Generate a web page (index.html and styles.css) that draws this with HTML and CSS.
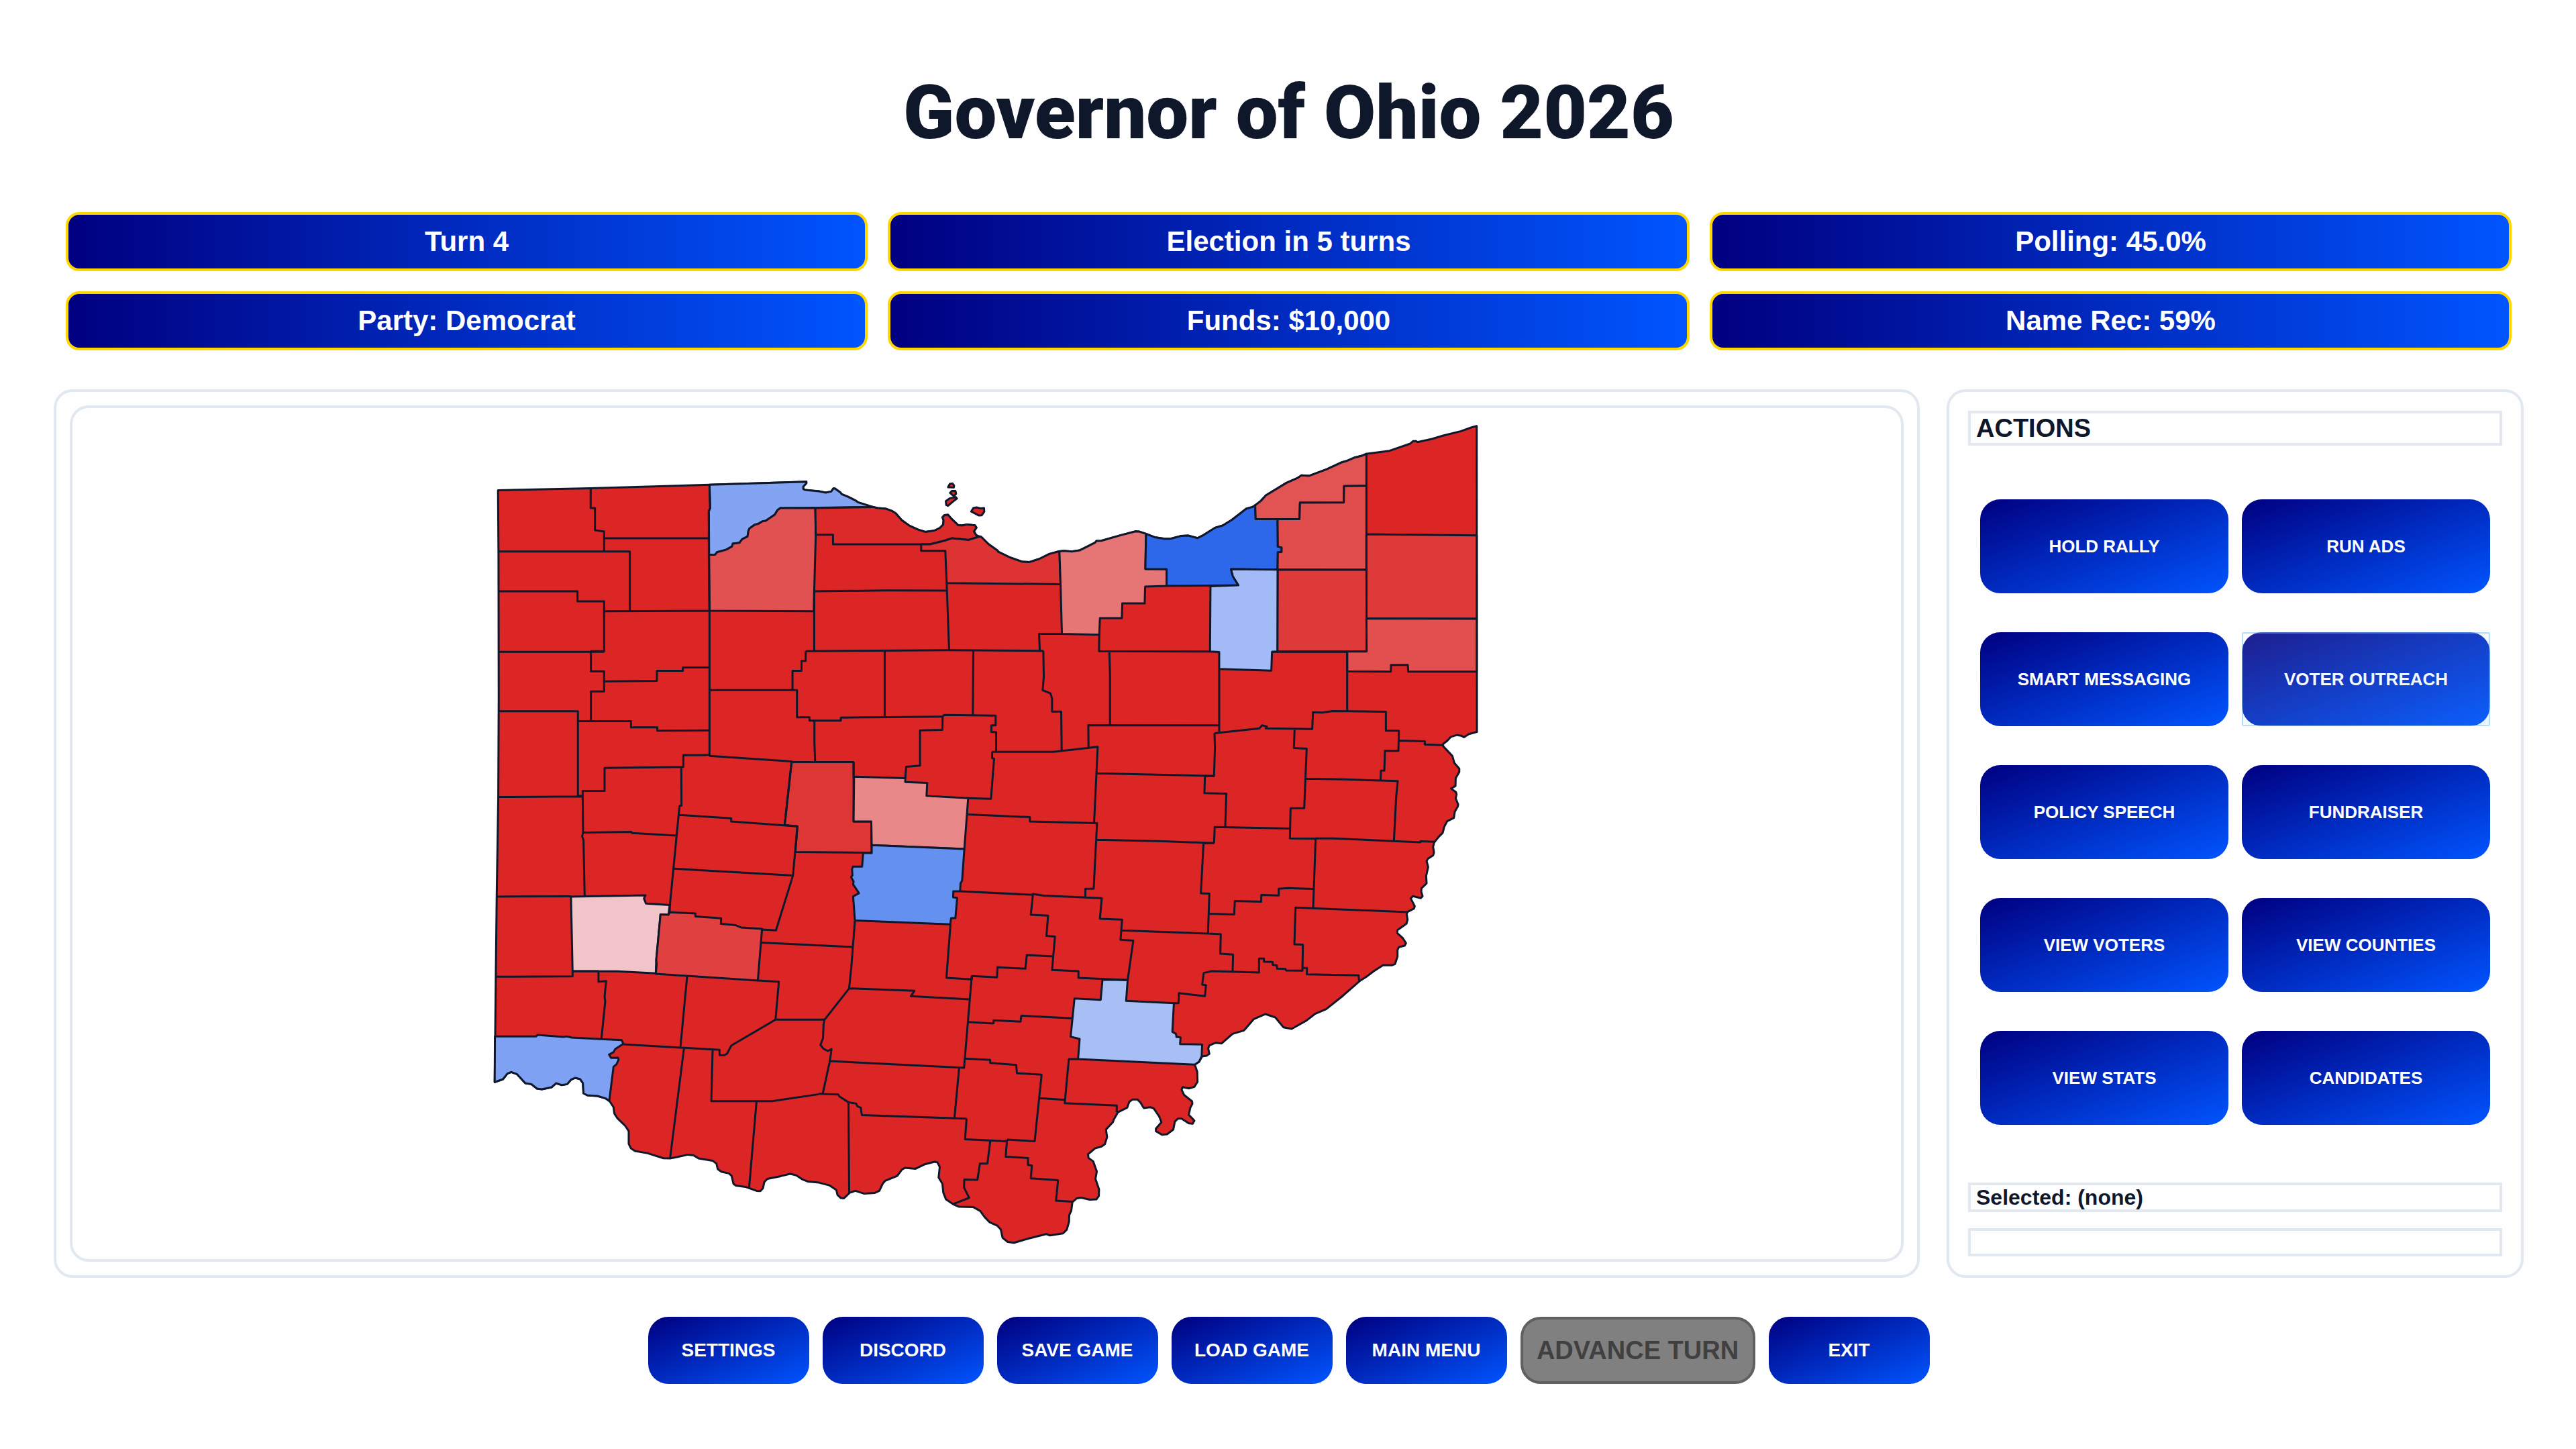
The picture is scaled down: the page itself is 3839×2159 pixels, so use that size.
FILE: index.html
```html
<!DOCTYPE html>
<html lang="en">
<head>
    <meta charset="UTF-8">
    <meta name="viewport" content="width=device-width, initial-scale=1.0">
    <title>Governor of Ohio 2026</title>
    <link rel="stylesheet" href="styles.css">
</head>
<body>

    <h1 class="title">Governor of Ohio 2026</h1>

    <section class="stats">
        <div class="stat">Turn 4</div>
        <div class="stat">Election in 5 turns</div>
        <div class="stat">Polling: 45.0%</div>
        <div class="stat">Party: Democrat</div>
        <div class="stat">Funds: $10,000</div>
        <div class="stat">Name Rec: 59%</div>
    </section>

    <main class="board">
        <section class="panel map-panel">
            <div class="map-frame">
                <svg class="map" viewBox="-1836 -36 8172 3804" role="img" aria-label="Ohio county map">
                    <!-- State outline -->
                    <path class="county" d="M66 331 L480 322 L1011 307 L1444 293 L1444 300 L1430 315 L1430 325 L1438 330 L1500 336 L1530 342 L1555 337 L1565 323 L1572 324 L1597 342 L1602 349 L1630 360 L1665 378 L1674 385 L1730 403 L1762 411 L1800 414 L1825 423 L1843 434 L1870 465 L1905 490 L1945 508 L1975 517 L2015 512 L2040 500 L2055 485 L2057 465 L2052 452 L2062 442 L2077 441 L2090 456 L2122 487 L2140 489 L2162 484 L2197 488 L2204 498 L2193 515 L2203 532 L2215 537 L2225 539 L2258 572 L2297 600 L2303 607 L2355 632 L2410 651 L2442 652 L2485 638 L2530 616 L2572 604 L2595 602 L2630 605 L2665 600 L2735 565 L2740 558 L2762 557 L2850 532 L2915 515 L2932 516 L2962 526 L3000 541 L3045 548 L3072 548 L3120 535 L3150 534 L3192 545 L3220 531 L3270 499 L3305 489 L3345 464 L3410 414 L3438 406 L3452 398 L3475 379 L3498 354 L3590 298 L3640 276 L3656 265 L3690 267 L3770 237 L3835 207 L3860 200 L3895 185 L3930 176 L3945 169 L4050 155 L4143 123 L4155 112 L4170 112 L4175 116 L4240 102 L4290 87 L4370 67 L4415 51 L4440 44
                        L4441 1411 L4405 1421 L4383 1435 L4370 1428 L4352 1425 L4325 1433 L4309 1450 L4290 1465 L4290 1475 L4310 1496 L4331 1518 L4340 1550 L4362 1575 L4362 1590 L4346 1618 L4345 1653 L4325 1664 L4347 1680 L4350 1690 L4346 1708 L4357 1735 L4355 1745 L4342 1768 L4338 1795 L4308 1810 L4295 1835 L4288 1862 L4270 1880 L4250 1905 L4245 1925 L4249 1950 L4245 1963 L4222 1978 L4216 1988 L4223 2015 L4214 2055 L4216 2088 L4193 2110 L4192 2125 L4198 2145 L4190 2154 L4155 2145 L4145 2155 L4163 2190 L4160 2200 L4130 2216 L4127 2225 L4131 2250 L4126 2268 L4085 2297 L4085 2310 L4110 2333 L4124 2355 L4118 2366 L4092 2373 L4086 2385 L4086 2415 L4075 2448 L4060 2454 L4022 2453 L3980 2480 L3950 2503 L3920 2522
                        L3841 2591 L3767 2650 L3716 2672 L3679 2701 L3613 2738 L3576 2731 L3540 2687 L3496 2672 L3444 2694 L3400 2745 L3349 2760 L3300 2803 L3274 2800 L3245 2812 L3240 2825 L3245 2850 L3233 2858 L3213 2861 L3199 2885 L3180 2898 L3191 2930 L3192 2975 L3178 2997 L3153 3004 L3126 2998 L3121 3010 L3132 3033 L3168 3062 L3169 3073 L3160 3090 L3153 3122 L3178 3148 L3170 3162 L3153 3160 L3121 3139 L3105 3139 L3091 3152 L3084 3188 L3056 3209 L3033 3211 L3006 3195 L3006 3184 L3031 3155 L3021 3130 L2996 3093 L2981 3088 L2952 3092 L2937 3067 L2924 3054 L2901 3054 L2887 3064 L2878 3090 L2837 3110 L2818 3143 L2814 3155 L2783 3188 L2788 3222 L2778 3253 L2763 3264 L2734 3272 L2703 3298 L2705 3315 L2726 3330 L2742 3375 L2736 3408 L2752 3455 L2751 3485 L2740 3500 L2711 3501 L2671 3492 L2651 3496 L2633 3512 L2628 3550 L2619 3570 L2618 3600 L2608 3635 L2591 3652 L2533 3661 L2516 3655 L2436 3675 L2372 3694 L2344 3690 L2321 3672 L2313 3635 L2298 3618 L2263 3602 L2240 3578 L2221 3552 L2189 3534 L2126 3533 L2099 3521 L2068 3500 L2056 3470 L2052 3430 L2035 3402 L2040 3355 L2030 3335 L2017 3332 L1971 3344 L1932 3363 L1885 3359 L1870 3368 L1850 3395 L1796 3417 L1785 3430 L1770 3462 L1750 3471 L1701 3474 L1663 3462 L1638 3470 L1612 3495 L1598 3494 L1583 3480 L1578 3458 L1546 3437 L1500 3425
                        L1450 3420 L1425 3410 L1400 3393 L1372 3386 L1330 3396 L1270 3408 L1256 3422 L1250 3450 L1238 3463 L1222 3462 L1188 3450 L1172 3444 L1128 3438 L1118 3430 L1110 3395 L1098 3384 L1065 3377 L1048 3365 L1042 3340 L1025 3327 L962 3317 L940 3303 L915 3300 L870 3310 L835 3317 L805 3316 L735 3294 L678 3284 L660 3272 L650 3252 L650 3195 L635 3172 L600 3138 L586 3117 L582 3088 L565 3062 L545 3048 L510 3038 L465 3035 L448 3026 L445 2980 L432 2962 L410 2957 L392 2965 L375 2985 L350 2989 L325 2981 L305 2999 L262 3008 L240 3005 L215 2985 L188 2981 L150 2940 L125 2931 L108 2938 L88 2963 L51 2976
                        L56 2505 L60 2145 L67 1705 L69 1260 L68 620 Z"/>

                    <!-- Lake Erie islands -->
                    <path class="county" d="M2077 318 L2085 303 L2097 301 L2104 310 L2103 319 Z M2086 343 L2094 334 L2110 334 L2113 347 L2103 358 Z M2067 380 L2085 367 L2112 362 L2117 368 L2100 381 L2077 401 L2069 397 Z M2181 426 L2190 411 L2205 408 L2222 412 L2238 411 L2239 427 L2228 443 L2215 444 Z"/>

                    <!-- Counties with their own shade -->
                    <path class="county" fill="#82a4f3" d="M1011 307 L1444 293 L1444 300 L1430 315 L1430 325 L1438 330 L1500 336 L1530 342 L1555 337 L1565 323 L1572 324 L1597 342 L1602 349 L1630 360 L1665 378 L1674 385 L1742 406 L1500 409 L1328 411 L1315 420 L1303 440 L1262 468 L1248 470 L1230 481 L1212 486 L1190 502 L1185 512 L1181 538 L1157 550 L1145 566 L1115 570 L1112 582 L1085 597 L1045 608 L1036 619 L1008 619 L1008 425 L1014 410 Z"/>
                    <path class="county" fill="#e25151" d="M1484 411 L1328 411 L1315 420 L1303 440 L1262 468 L1248 470 L1230 481 L1212 486 L1190 502 L1185 512 L1181 538 L1157 550 L1145 566 L1115 570 L1112 582 L1085 597 L1045 608 L1036 619 L1008 619 L1011 870 L1477 872 L1479 783 L1486 530 Z"/>
                    <path class="county" fill="#dc2a2a" d="M1742 406 L1762 411 L1800 414 L1825 423 L1843 434 L1870 465 L1905 490 L1945 508 L1975 517 L2015 512 L2040 500 L2055 485 L2057 465 L2052 452 L2062 442 L2077 441 L2090 456 L2122 487 L2140 489 L2162 484 L2197 488 L2204 498 L2193 515 L2203 532 L2215 539 L2170 553 L2094 546 L2060 557 L1997 573 L1563 573 L1563 530 L1486 530 L1484 411 Z"/>
                    <path class="county" fill="#de3333" d="M2215 539 L2225 539 L2258 572 L2297 600 L2303 607 L2355 632 L2410 651 L2442 652 L2485 638 L2530 616 L2575 604 L2580 751 L2071 746 L2065 602 L1957 602 L1957 573 L1997 573 L2060 557 L2094 546 L2170 553 Z"/>
                    <path class="county" fill="#e67575" d="M2575 604 L2595 602 L2630 605 L2665 600 L2735 565 L2740 558 L2762 557 L2850 532 L2915 515 L2932 516 L2962 526 L2959 683 L3054 684 L3054 759 L2958 762 L2956 837 L2856 837 L2854 903 L2756 903 L2753 977 L2586 973 L2580 751 Z"/>
                    <path class="county" fill="#2d68eb" d="M2962 526 L3000 541 L3045 548 L3072 548 L3120 535 L3150 534 L3192 545 L3220 531 L3270 499 L3305 489 L3345 464 L3410 414 L3438 406 L3450 398 L3452 460 L3550 460 L3551 583 L3568 587 L3568 607 L3551 608 L3550 686 L3342 684 L3350 715 L3375 756 L3054 759 L3054 684 L2959 683 Z"/>
                    <g transform="translate(3000 0)">
                        <path class="county" fill="#e25353" d="M450 398 L475 379 L498 354 L590 298 L640 276 L656 265 L690 267 L770 237 L835 207 L860 200 L895 185 L930 176 L947 169 L947 312 L847 313 L846 386 L650 387 L648 460 L452 460 Z"/>
                        <path class="county" fill="#e14d4d" d="M550 460 L648 460 L650 387 L846 386 L847 313 L947 312 L947 687 L550 686 L551 608 L568 607 L568 587 L551 583 Z"/>
                        <path class="county" fill="#df3a3a" d="M947 528 L1440 533 L1440 906 L947 904 Z"/>
                        <path class="county" fill="#df3a3a" d="M550 686 L947 687 L948 1052 L549 1052 Z"/>
                        <path class="county" fill="#e14f4f" d="M947 904 L1440 906 L1440 1142 L1134 1142 L1132 1112 L1057 1112 L1056 1142 L861 1140 L861 1052 L948 1052 Z"/>
                        <path class="county" fill="#a2baf5" d="M342 684 L550 686 L549 1052 L525 1053 L522 1137 L289 1130 L289 1054 L248 1052 L250 760 L375 756 L350 715 Z"/>
                    </g>
                    <path class="county" fill="#de3535" d="M1378 1546 L1655 1546 L1655 1811 L1734 1811 L1736 1951 L1395 1948 L1404 1833 L1347 1827 Z"/>
                    <g transform="translate(1500 1260)">
                        <path class="county" fill="#e98888" d="M157 351 L386 358 L386 375 L484 379 L481 437 L667 447 L650 674 L236 657 L234 551 L155 551 Z"/>
                        <path class="county" fill="#6490f0" d="M236 657 L650 674 L640 815 L633 828 L631 863 L601 863 L600 890 L618 893 L610 983 L591 983 L587 1011 L161 994 L153 886 L179 872 L153 832 L155 820 L144 800 L150 792 L148 765 L152 753 L193 753 L198 692 L236 692 Z"/>
                    </g>
                    <g transform="translate(0 1260)">
                        <path class="county" fill="#f0c4c8" d="M392 887 L725 881 L718 895 L727 918 L833 925 L828 968 L792 967 L773 1170 L771 1230 L600 1221 L399 1220 Z"/>
                        <path class="county" fill="#e04040" d="M833 957 L948 962 L948 976 L1063 984 L1062 1009 L1128 1015 L1152 1025 L1246 1031 L1227 1262 L771 1232 L775 1190 L773 1170 L792 967 L828 968 Z"/>
                    </g>
                    <path class="county" fill="#7ea1f3" d="M52 2772 L235 2772 L243 2765 L355 2774 L375 2772 L395 2777 L525 2784 L618 2788 L626 2805 L590 2828 L582 2842 L562 2853 L571 2868 L602 2867 L605 2875 L595 2897 L582 2907 L563 3060 L545 3048 L510 3038 L465 3035 L448 3026 L445 2980 L432 2962 L410 2957 L392 2965 L375 2985 L350 2989 L325 2981 L305 2999 L262 3008 L240 3005 L215 2985 L188 2981 L150 2940 L125 2931 L108 2938 L88 2963 L51 2976 Z"/>
                    <g transform="translate(1500 2460) scale(1.148 1)">
                        <path class="county" fill="#a8bff5" d="M1104 58 L1202 60 L1196 153 L1382 163 L1376 291 L1390 300 L1392 314 L1408 316 L1406 346 L1492 348 L1490 401 L1480 425 L1463 438 L1009 413 L1015 323 L980 313 L995 142 L1097 148 Z"/>
                    </g>

                    <!-- Borders between the plain red counties -->
                    <g class="borders">
                        <path d="M480 322 V411 H499 V510 L540 516 V605 M540 546 H1008 M68 605 H655 V872 M68 783 H421 V828 H540 V1050 H481 V1140 H540 V1230 H481 V1363 M540 872 L1011 870 M68 1053 H540 M540 1185 L776 1183 V1138 H892 V1123 H1010 M1011 307 L1014 410 L1008 425 L1011 870 V1520 M1479 783 L1800 779 L2071 780 M1479 783 V1050 M1441 1050 V1094 H1422 V1138 H1382 V1224 M1011 1224 H1402 V1346 H1458 V1361 H1598 V1347 L2053 1343 M1441 1050 L2080 1046 L2503 1049"/>
                        <path transform="translate(1500 0)" d="M571 746 L582 1046 M294 1049 V1345 M690 1047 L688 1335 M1086 973 H984 L987 1049 M1003 1049 L1005 1165 L1000 1225 L1034 1238 L1042 1260 V1320 H1083 L1085 1495 M1253 977 L1252 1050 L1748 1052 M1298 1051 L1301 1150 V1380"/>
                        <path transform="translate(3000 0)" d="M289 1130 V1411 M525 1053 H861 V1318"/>
                        <path transform="translate(0 1260)" d="M69 59 H423 V437 H443 M423 103 H660 V131 H778 V146 L1010 144 M1010 252 L985 255 H894 V308 L542 312 V415 H444 L446 600 L442 618 L448 635 L453 883 M66 442 L443 440 M885 309 L886 480 L877 482 L834 925 L833 957 M448 601 L662 598 L665 603 L863 614 M1010 258 L1378 283 L1347 567 M877 522 L1108 537 V551 L1404 573 L1384 793 M1480 101 V200 L1483 286 M852 762 L1384 793 L1308 1038 L1246 1034 M60 887 L392 886 M399 1220 V1243 L56 1245 M1245 1093 L1650 1112"/>
                        <path transform="translate(1500 1260)" d="M553 83 L552 142 L452 144 V302 L390 307 L386 358 M553 83 L560 75 L790 78 V122 H771 V152 H792 V240 M774 240 H1048 L1246 218 L1230 556 M774 240 V268 L783 271 L769 450 L667 447 M155 351 V286 M1205 220 L1204 121 L1787 122 M1244 336 L1766 348 M665 520 L943 532 V551 L1243 559 L1228 852 H1191 V890 M1241 633 L1540 640 L1766 648 M631 863 L955 879 L957 875 L1005 883 L1264 894 L1256 986 L1355 990 L1348 1080 L1405 1084 L1380 1260 M957 875 L947 968 L1024 972 L1017 1063 L1055 1066 L1042 1215 L1160 1220 V1250 L1380 1260 M1046 1154 L929 1148 L923 1209 L798 1203 L796 1248 L684 1242 L683 1257 L570 1250 L588 1011 M161 994 L145 1200 L135 1297 M1352 1038 L1738 1052"/>
                        <path transform="translate(3000 1260)" d="M268 157 L470 135 L480 122 L502 127 L497 135 L705 138 L708 63 L750 65 L795 58 L1034 61 V146 H1092 L1090 236 L1030 235 L1027 324 H1012 L1010 370 M268 157 L270 220 L266 348 H225 L223 425 L321 427 L316 575 M626 138 L623 223 L680 226 L669 492 H608 L605 627 L720 628 M1092 190 L1208 193 V207 L1290 210 M678 360 L850 363 L1087 371 L1080 440 L1070 637 M720 627 H800 L1188 644 V640 L1252 642 M266 648 L269 576 L605 583 M266 648 L219 648 L207 872 L245 874 L239 1052 M720 628 L709 936 M245 964 L356 967 L359 907 L477 910 V880 L555 882 V852 L595 849 L709 853 M1130 956 L630 936 L625 1100 L663 1102 L661 1218 L588 1217 L585 1210 L548 1209 L546 1194 L528 1192 V1179 L489 1178 V1164 H467 V1226 L255 1220 L220 1228 L213 1280 L230 1283 L225 1332 L109 1318 L107 1363 H86 M239 1052 L296 1055 L294 1142 L351 1146 L349 1222 M663 1205 L681 1206 V1234 L912 1239 L914 1262"/>
                        <path transform="translate(0 2460)" d="M399 20 H515 V67 L549 64 L542 135 L545 155 L528 322 M1227 62 L1321 67 L1306 237 L1109 352 L1090 388 L1078 396 H1056 V372 L626 347 M911 44 L881 360 M897 365 L835 855 M1025 371 L1019 601 H1290 L1500 570 M1221 604 L1188 990 M1306 237 H1525"/>
                        <path transform="translate(1500 2460) scale(1.148 1)" d="M118 97 L22 237 L18 260 L16 320 L6 350 L18 367 L35 377 L49 368 L43 420 L15 567 M118 97 L372 108 L358 132 L585 146 M595 43 L565 452 L43 422 M580 247 L680 254 V240 L785 246 L788 219 L986 231 M568 411 L667 417 V430 L768 439 L771 476 L867 483 L840 780 L735 773 L732 780 L569 771 L575 679 M546 452 L528 673 M860 588 L957 595 M1009 413 H973 L957 610 L1160 621 L1159 650 M0 568 L75 571 L80 580 L115 606 L145 612 L150 624 L163 630 L167 663 L575 679 M115 606 L118 1012 M667 780 L656 880 H627 L617 953 L566 951 L565 987 L585 1033 L522 1061 M732 780 L727 849 L814 855 V886 L829 888 L825 946 L931 954 L923 1046 L987 1050"/>
                    </g>
                </svg>
            </div>
        </section>

        <aside class="panel actions-panel">
            <h2 class="box heading">ACTIONS</h2>
            <div class="actions">
                <button type="button">HOLD RALLY</button>
                <button type="button">RUN ADS</button>
                <button type="button">SMART MESSAGING</button>
                <button type="button" class="highlight">VOTER OUTREACH</button>
                <button type="button">POLICY SPEECH</button>
                <button type="button">FUNDRAISER</button>
                <button type="button">VIEW VOTERS</button>
                <button type="button">VIEW COUNTIES</button>
                <button type="button">VIEW STATS</button>
                <button type="button">CANDIDATES</button>
            </div>
            <div class="box selected">Selected: (none)</div>
            <div class="box message"></div>
        </aside>
    </main>

    <footer class="toolbar">
        <button type="button">SETTINGS</button>
        <button type="button">DISCORD</button>
        <button type="button">SAVE GAME</button>
        <button type="button">LOAD GAME</button>
        <button type="button">MAIN MENU</button>
        <button type="button" class="advance" disabled>ADVANCE TURN</button>
        <button type="button">EXIT</button>
    </footer>

</body>
</html>
```
FILE: styles.css
```css
* {
    box-sizing: border-box;
}

body {
    font-family: Arial, "Liberation Sans", sans-serif;
    font-weight: bold;
    background-color: #fefefe;
    color: #0f172a;
    margin: 0;
    padding: 80px 78px 97px 80px;
    min-height: 100vh;
    display: flex;
    flex-direction: column;
}

.title {
    margin: 0;
    font-family: Impact, Roboto, "Liberation Sans", sans-serif;
    font-size: 112px;
    font-weight: 900;
    line-height: 176px;
    text-align: center;
}

.stats {
    display: grid;
    grid-template-columns: repeat(3, 1fr);
    gap: 30px;
    margin: 60px 18px 58px;
}

.stat {
    height: 88px;
    border: 4px solid #ffd700;
    border-radius: 20px;
    background: linear-gradient(to right, #000080, #0055ff);
    color: white;
    font-size: 42px;
    line-height: 80px;
    text-align: center;
}

.board {
    flex: 1;
    display: grid;
    grid-template-columns: minmax(0, 1fr) 860px;
    gap: 40px;
}

.panel {
    display: flex;
    flex-direction: column;
    border: 4px solid #e2e8f0;
    border-radius: 28px;
}

.map-panel {
    padding: 20px;
}

.map-frame {
    flex: 1;
    display: flex;
    border: 4px solid #e2e8f0;
    border-radius: 28px;
}

.map {
    width: 100%;
    height: 100%;
}

.county {
    stroke: #0f172a;
    stroke-width: 3px;
    stroke-linejoin: round;
    vector-effect: non-scaling-stroke;
}

.county:not([fill]) {
    fill: #dc2626;
}

.borders path {
    fill: none;
    stroke: #0f172a;
    stroke-width: 3px;
    stroke-linejoin: round;
    vector-effect: non-scaling-stroke;
}

.actions-panel {
    padding: 28px;
}

.box {
    margin: 0;
    padding: 0 8px;
    border: 4px solid #e2e8f0;
}

.heading {
    font-size: 38px;
    line-height: 44px;
}

.actions {
    display: grid;
    grid-template-columns: 1fr 1fr;
    gap: 58px 20px;
    margin: 80px 18px;
}

button {
    border: none;
    border-radius: 30px;
    background: linear-gradient(to bottom right, #000080, #0055ff);
    color: white;
    font-family: inherit;
    font-weight: bold;
    padding: 0;
    cursor: pointer;
}

.actions button {
    height: 140px;
    font-size: 26px;
    position: relative;
}

/* square selection box drawn over the rounded button */
.highlight::after {
    content: "";
    position: absolute;
    inset: 0;
    border: 2px solid rgba(120, 190, 240, 0.5);
    border-radius: 3px;
    background: linear-gradient(to bottom right, rgba(240, 248, 255, 0.12), rgba(90, 175, 245, 0.12));
}

.selected {
    margin-top: auto;
    font-size: 32px;
    line-height: 36px;
}

.message {
    margin-top: 24px;
    height: 42px;
}

.toolbar {
    display: flex;
    justify-content: center;
    gap: 20px;
    margin-top: 58px;
}

.toolbar button {
    width: 240px;
    height: 100px;
    font-size: 28px;
}

.toolbar .advance {
    width: 350px;
    border: 4px solid #606060;
    background: #808080;
    color: #404040;
    font-size: 38px;
    cursor: default;
}
```
